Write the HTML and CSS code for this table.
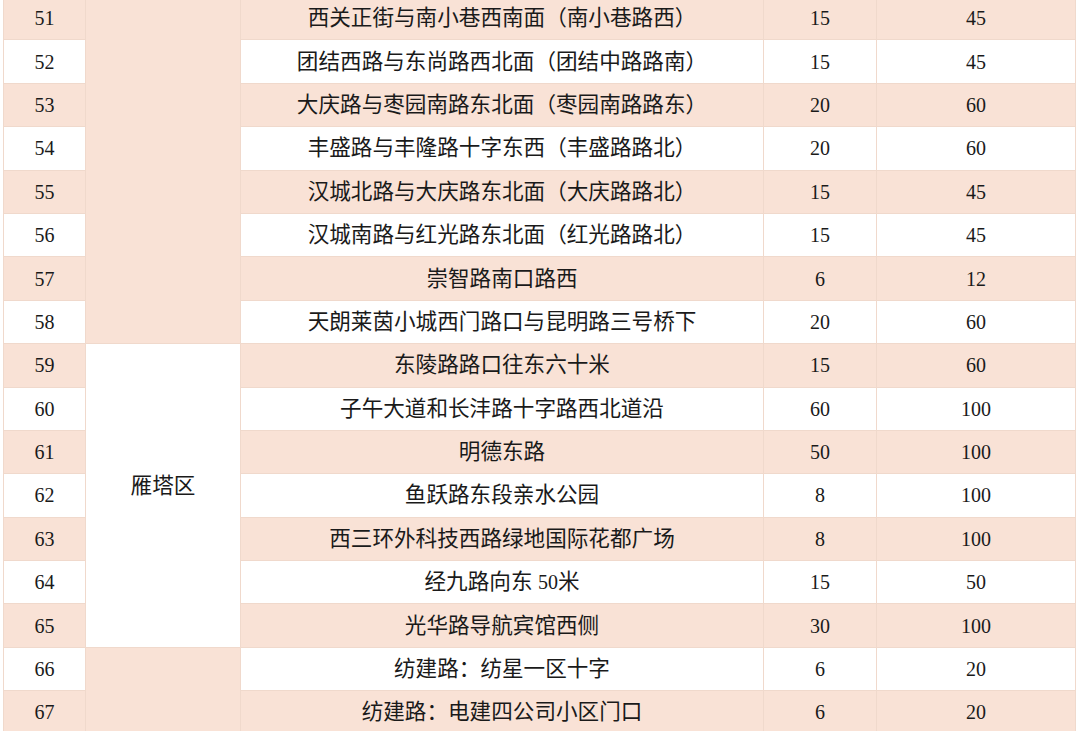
FILE: index.html
```html
<!DOCTYPE html>
<html lang="zh">
<head>
<meta charset="utf-8">
<link rel="stylesheet" href="styles.css">
</head>
<body>
<table class="sheet">
<colgroup>
<col class="c-no"><col class="c-dist"><col class="c-loc"><col class="c-a"><col class="c-b">
</colgroup>
<tbody>
<tr class="odd"><td>51</td><td class="dist peach" rowspan="8"></td><td class="loc">西关正街与南小巷西南面（南小巷路西）</td><td>15</td><td>45</td></tr>
<tr class="even"><td>52</td><td class="loc">团结西路与东尚路西北面（团结中路路南）</td><td>15</td><td>45</td></tr>
<tr class="odd"><td>53</td><td class="loc">大庆路与枣园南路东北面（枣园南路路东）</td><td>20</td><td>60</td></tr>
<tr class="even"><td>54</td><td class="loc">丰盛路与丰隆路十字东西（丰盛路路北）</td><td>20</td><td>60</td></tr>
<tr class="odd"><td>55</td><td class="loc">汉城北路与大庆路东北面（大庆路路北）</td><td>15</td><td>45</td></tr>
<tr class="even"><td>56</td><td class="loc">汉城南路与红光路东北面（红光路路北）</td><td>15</td><td>45</td></tr>
<tr class="odd"><td>57</td><td class="loc">崇智路南口路西</td><td>6</td><td>12</td></tr>
<tr class="even"><td>58</td><td class="loc">天朗莱茵小城西门路口与昆明路三号桥下</td><td>20</td><td>60</td></tr>
<tr class="odd"><td>59</td><td class="dist white" rowspan="7"><span class="dname">雁塔区</span></td><td class="loc">东陵路路口往东六十米</td><td>15</td><td>60</td></tr>
<tr class="even"><td>60</td><td class="loc">子午大道和长沣路十字路西北道沿</td><td>60</td><td>100</td></tr>
<tr class="odd"><td>61</td><td class="loc">明德东路</td><td>50</td><td>100</td></tr>
<tr class="even"><td>62</td><td class="loc">鱼跃路东段亲水公园</td><td>8</td><td>100</td></tr>
<tr class="odd"><td>63</td><td class="loc">西三环外科技西路绿地国际花都广场</td><td>8</td><td>100</td></tr>
<tr class="even"><td>64</td><td class="loc">经九路向东 <span class="num">50</span>米</td><td>15</td><td>50</td></tr>
<tr class="odd"><td>65</td><td class="loc">光华路导航宾馆西侧</td><td>30</td><td>100</td></tr>
<tr class="even"><td>66</td><td class="dist peach" rowspan="2"></td><td class="loc">纺建路：纺星一区十字</td><td>6</td><td>20</td></tr>
<tr class="odd"><td>67</td><td class="loc">纺建路：电建四公司小区门口</td><td>6</td><td>20</td></tr>
</tbody>
</table>
</body>
</html>
```
FILE: styles.css
```css
html, body {
  margin: 0;
  padding: 0;
  background: #ffffff;
}
body {
  overflow: hidden;
  height: 731px;
}
.sheet {
  border-collapse: collapse;
  table-layout: fixed;
  width: 1073px;
  margin: -4px 0 0 3px;
  font-family: "Liberation Serif", "Noto Sans CJK SC", serif;
  font-size: 20px;
  color: #1a1a1a;
}
.c-no { width: 82px; }
.c-dist { width: 155px; }
.c-loc { width: 523px; }
.c-a { width: 113px; }
.c-b { width: 199px; }
.sheet td {
  height: 43.4px;
  padding: 0;
  text-align: center;
  vertical-align: middle;
  border: 1px solid #f0d9cc;
  box-sizing: border-box;
  line-height: 24px;
}
.sheet td.loc, .sheet td.dist {
  font-size: 21.6px;
}
.sheet td.loc .num {
  font-size: 20px;
}
.sheet tr.odd td { background: #f9e2d6; }
.sheet tr.even td { background: #ffffff; }
.sheet td:nth-child(4), .sheet td:nth-child(5) { border-left-color: #e6cbbb; }
.sheet tr td.dist.peach { background: #f9e2d6; }
.sheet tr td.dist.white { background: #ffffff; }
.dname {
  display: inline-block;
  padding-bottom: 18px;
}
```
